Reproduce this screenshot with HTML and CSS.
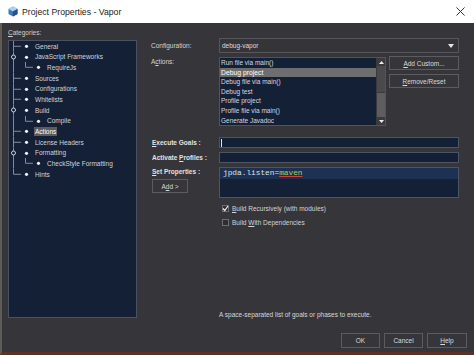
FILE: index.html
```html
<!DOCTYPE html>
<html lang="en">
<head>
    <meta charset="UTF-8">
    <title>Project Properties - Vapor</title>
    <link rel="stylesheet" href="styles.css">
</head>
<body>
    <div class="titlebar">
        <svg class="app-icon" width="10" height="11" viewBox="0 0 10 11">
            <path d="M5 0.5L9.5 3V8L5 10.5L0.5 8V3Z" fill="#3a78b8"/>
            <path d="M5 0.5L9.5 3L5 5.5L0.5 3Z" fill="#a9d2f2"/>
            <path d="M5 5.5V10.5L9.5 8V3Z" fill="#21538a"/>
        </svg>
        <span class="title">Project Properties - Vapor</span>
        <svg class="close" width="9" height="9" viewBox="0 0 9 9">
            <path d="M0.5 0.5L8.5 8.5M8.5 0.5L0.5 8.5" stroke="#333" stroke-width="1"/>
        </svg>
    </div>

    <div class="frame">
        <div class="main">
            <!-- categories -->
            <div class="categories">
                <div class="cat-label"><u>C</u>ategories:</div>
                <div class="tree">
                    <div class="tree-row">
                        <svg class="gutter g1" viewBox="0 0 26 10.67"><path class="ln" d="M4.5 0V10.67M4.5 5.3H12"/><circle class="dot" cx="17.5" cy="5.3" r="1.6"/></svg>
                        <span>General</span>
                    </div>
                    <div class="tree-row">
                        <svg class="gutter g1" viewBox="0 0 26 10.67"><path class="ln" d="M4.5 0V10.67"/><circle class="exp" cx="4.5" cy="5" r="2"/><circle class="dot" cx="17.5" cy="5.3" r="1.6"/></svg>
                        <span>JavaScript Frameworks</span>
                    </div>
                    <div class="tree-row">
                        <svg class="gutter g2" viewBox="0 0 38 10.67"><path class="ln" d="M4.5 0V10.67M16.5 0V5.3H24"/><circle class="dot" cx="29.5" cy="5.3" r="1.6"/></svg>
                        <span>RequireJs</span>
                    </div>
                    <div class="tree-row">
                        <svg class="gutter g1" viewBox="0 0 26 10.67"><path class="ln" d="M4.5 0V10.67M4.5 5.3H12"/><circle class="dot" cx="17.5" cy="5.3" r="1.6"/></svg>
                        <span>Sources</span>
                    </div>
                    <div class="tree-row">
                        <svg class="gutter g1" viewBox="0 0 26 10.67"><path class="ln" d="M4.5 0V10.67M4.5 5.3H12"/><circle class="dot" cx="17.5" cy="5.3" r="1.6"/></svg>
                        <span>Configurations</span>
                    </div>
                    <div class="tree-row">
                        <svg class="gutter g1" viewBox="0 0 26 10.67"><path class="ln" d="M4.5 0V10.67M4.5 5.3H12"/><circle class="dot" cx="17.5" cy="5.3" r="1.6"/></svg>
                        <span>Whitelists</span>
                    </div>
                    <div class="tree-row">
                        <svg class="gutter g1" viewBox="0 0 26 10.67"><path class="ln" d="M4.5 0V10.67"/><circle class="exp" cx="4.5" cy="5" r="2"/><circle class="dot" cx="17.5" cy="5.3" r="1.6"/></svg>
                        <span>Build</span>
                    </div>
                    <div class="tree-row">
                        <svg class="gutter g2" viewBox="0 0 38 10.67"><path class="ln" d="M4.5 0V10.67M16.5 0V5.3H24"/><circle class="dot" cx="29.5" cy="5.3" r="1.6"/></svg>
                        <span>Compile</span>
                    </div>
                    <div class="tree-row">
                        <svg class="gutter g1" viewBox="0 0 26 10.67"><path class="ln" d="M4.5 0V10.67M4.5 5.3H12"/><circle class="dot" cx="17.5" cy="5.3" r="1.6"/></svg>
                        <span class="selected">Actions</span>
                    </div>
                    <div class="tree-row">
                        <svg class="gutter g1" viewBox="0 0 26 10.67"><path class="ln" d="M4.5 0V10.67M4.5 5.3H12"/><circle class="dot" cx="17.5" cy="5.3" r="1.6"/></svg>
                        <span>License Headers</span>
                    </div>
                    <div class="tree-row">
                        <svg class="gutter g1" viewBox="0 0 26 10.67"><path class="ln" d="M4.5 0V10.67"/><circle class="exp" cx="4.5" cy="5" r="2"/><circle class="dot" cx="17.5" cy="5.3" r="1.6"/></svg>
                        <span>Formatting</span>
                    </div>
                    <div class="tree-row">
                        <svg class="gutter g2" viewBox="0 0 38 10.67"><path class="ln" d="M4.5 0V10.67M16.5 0V5.3H24"/><circle class="dot" cx="29.5" cy="5.3" r="1.6"/></svg>
                        <span>CheckStyle Formatting</span>
                    </div>
                    <div class="tree-row">
                        <svg class="gutter g1" viewBox="0 0 26 10.67"><path class="ln" d="M4.5 0V5.3H12"/><circle class="dot" cx="17.5" cy="5.3" r="1.6"/></svg>
                        <span>Hints</span>
                    </div>
                </div>
            </div>

            <!-- form -->
            <div class="form">
                <div class="config-row">
                    <label class="label">Configuration:</label>
                    <div class="combo">
                        <span>debug-vapor</span>
                        <svg width="6" height="4" viewBox="0 0 6 4"><path d="M0 0H6L3 4Z" fill="#e6e6e6"/></svg>
                    </div>
                </div>

                <div class="actions-row">
                    <label class="label">A<u>c</u>tions:</label>
                    <div class="list">
                        <div class="items">
                            <div class="item">Run file via main()</div>
                            <div class="item sel">Debug project</div>
                            <div class="item">Debug file via main()</div>
                            <div class="item">Debug test</div>
                            <div class="item">Profile project</div>
                            <div class="item">Profile file via main()</div>
                            <div class="item">Generate Javadoc</div>
                        </div>
                        <div class="scrollbar">
                            <div class="sb-btn"><svg width="5" height="3" viewBox="0 0 5 3"><path d="M0 3H5L2.5 0Z" fill="#eee"/></svg></div>
                            <div class="sb-thumb"></div>
                            <div class="sb-track"></div>
                            <div class="sb-btn"><svg width="5" height="3" viewBox="0 0 5 3"><path d="M0 0H5L2.5 3Z" fill="#eee"/></svg></div>
                        </div>
                    </div>
                    <div class="side-buttons">
                        <button class="btn"><u>A</u>dd Custom...</button>
                        <button class="btn"><u>R</u>emove/Reset</button>
                    </div>
                </div>

                <div class="goals">
                    <label class="label bold"><u>E</u>xecute Goals :</label>
                    <div class="field"><span class="caret"></span></div>

                    <label class="label bold">Activate <u>P</u>rofiles :</label>
                    <div class="field"></div>

                    <div class="label-stack">
                        <label class="label bold"><u>S</u>et Properties :</label>
                        <button class="btn add-btn">A<u>d</u>d &gt;</button>
                    </div>
                    <div class="props">
                        <div class="props-line">jpda.listen=<span class="val">maven</span></div>
                    </div>
                </div>

                <div class="checks">
                    <div class="check">
                        <span class="box">
                            <svg width="7" height="7" viewBox="0 0 7 7"><path d="M1 3.5L2.8 5.5L6 1" stroke="#f2f2f2" stroke-width="1.2" fill="none"/></svg>
                        </span>
                        <span><u>B</u>uild Recursively (with modules)</span>
                    </div>
                    <div class="check">
                        <span class="box"></span>
                        <span>Build <u>W</u>ith Dependencies</span>
                    </div>
                </div>

                <div class="hint">A space-separated list of goals or phases to execute.</div>
            </div>
        </div>

        <div class="footer">
            <button class="btn dlg-btn">OK</button>
            <button class="btn dlg-btn">Cancel</button>
            <button class="btn dlg-btn help"><u>H</u>elp</button>
        </div>
    </div>
</body>
</html>
```

FILE: styles.css
```css
* {
    box-sizing: border-box;
    margin: 0;
    padding: 0;
}
body {
    width: 474px;
    height: 355px;
    overflow: hidden;
    font-family: "Liberation Sans", Arial, sans-serif;
    font-size: 6.5px;
    color: #d4d4d6;
    background-color: #363539;
}
u {
    text-decoration-thickness: 0.5px;
    text-underline-offset: 1px;
}
.titlebar {
    height: 23px;
    display: flex;
    align-items: center;
    padding-left: 8px;
    background-color: #fff;
}
.title {
    margin-left: 4px;
    font-size: 8.7px;
    color: #1b1b1b;
}
.close {
    margin-left: auto;
    margin-right: 9px;
}
.frame {
    height: 332px;
    display: flex;
    flex-direction: column;
    border-left: 2px solid #5f5b57;
    border-bottom: 3px solid #5a3226;
}
.main {
    height: 303px;
    display: flex;
    padding-left: 6px;
}
.categories {
    width: 129px;
    padding-top: 5px;
}
.cat-label {
    line-height: 10px;
    margin-bottom: 2px;
    color: #d0d0d0;
}
.tree {
    height: 278px;
    background-color: #142036;
    border: 1px solid #4a5262;
}
.tree-row {
    height: 10.67px;
    display: flex;
    align-items: center;
    white-space: nowrap;
    color: #d0d5de;
}
.gutter {
    flex: none;
    height: 10.67px;
}
.g1 {
    width: 26px;
}
.g2 {
    width: 38px;
}
.ln {
    stroke: #858d9c;
    stroke-width: 1;
    fill: none;
}
.dot {
    fill: #eef1f6;
}
.exp {
    fill: #142036;
    stroke: #cfd3da;
    stroke-width: 1;
}
.tree-row .selected {
    margin-left: -1px;
    padding: 1px 1px;
    background-color: #5c5c60;
    color: #fff;
}
.form {
    width: 308px;
    margin-left: 14px;
    display: flex;
    flex-direction: column;
    padding-top: 15px;
}
.label {
    display: block;
    width: 68px;
    color: #d4d4d6;
}
.bold {
    font-weight: bold;
    color: #e2e2e4;
    padding-left: 1px;
    line-height: 11px;
}
.config-row {
    display: flex;
    height: 15px;
}
.config-row .label {
    line-height: 15px;
}
.combo {
    width: 240px;
    height: 15px;
    display: flex;
    align-items: center;
    justify-content: space-between;
    padding: 0 4px 0 2px;
    border: 1px solid #57575b;
    background-color: #353438;
    color: #dcdcde;
}
.actions-row {
    display: flex;
    height: 69px;
    margin-top: 4px;
}
.actions-row .label {
    line-height: 9.6px;
}
.list {
    width: 167px;
    height: 69px;
    display: flex;
    border: 1px solid #4c5466;
    background-color: #142036;
}
.items {
    flex: 1;
}
.item {
    line-height: 9.6px;
    padding-left: 1px;
    color: #d4d8e0;
    white-space: nowrap;
}
.item.sel {
    background-color: #6e6e70;
    color: #fff;
    font-size: 6.8px;
}
.scrollbar {
    width: 9px;
    display: flex;
    flex-direction: column;
    border-left: 1px solid #3a3a3c;
    background-color: #5e5e60;
}
.sb-btn {
    height: 8px;
    display: flex;
    align-items: center;
    justify-content: center;
    background-color: #3b3b3e;
}
.sb-thumb {
    height: 27px;
    background-color: #4a4a4d;
    border-bottom: 1px solid #3a3a3c;
}
.sb-track {
    flex: 1;
}
.side-buttons {
    display: flex;
    flex-direction: column;
    gap: 4px;
    margin-left: 3px;
    margin-top: -1px;
}
.btn {
    height: 14px;
    border: 1px solid #5c5c60;
    background-color: #363539;
    color: #dadadc;
    font-family: "Liberation Sans", Arial, sans-serif;
    font-size: 6.5px;
}
.side-buttons .btn {
    width: 70px;
}
.goals {
    display: grid;
    grid-template-columns: 68px 240px;
    row-gap: 4px;
    margin-top: 11px;
}
.field {
    height: 11px;
    border: 1px solid #4c5466;
    background-color: #142036;
    display: flex;
    align-items: center;
}
.caret {
    width: 1px;
    height: 8px;
    margin-left: 1px;
    background-color: #e6e6e6;
}
.label-stack .label {
    line-height: 10px;
}
.add-btn {
    display: block;
    width: 36px;
    margin-top: 2px;
    margin-left: 1px;
}
.props {
    height: 31px;
    border: 1px solid #4c5466;
    background-color: #142036;
}
.props-line {
    line-height: 11px;
    padding-left: 3px;
    background-color: #1d3152;
    font-family: "Liberation Mono", "Courier New", monospace;
    font-size: 7.8px;
    color: #dde2ea;
}
.val {
    color: #a4cf5c;
    text-decoration: underline #d04040;
    text-decoration-thickness: 1px;
    text-underline-offset: 1px;
}
.checks {
    display: flex;
    flex-direction: column;
    gap: 4px;
    margin-top: 5px;
    margin-left: 68px;
}
.check {
    height: 10px;
    display: flex;
    align-items: center;
}
.box {
    width: 7px;
    height: 7px;
    margin-left: 3px;
    margin-right: 3px;
    border: 1px solid #6e6e72;
    background-color: #2e2e32;
    display: flex;
    align-items: center;
    justify-content: center;
}
.box svg {
    flex: none;
}
.hint {
    margin-top: auto;
    margin-left: 68px;
    margin-bottom: 6px;
    line-height: 10px;
    color: #d8d8da;
}
.footer {
    flex: 1;
    display: flex;
    justify-content: flex-end;
    gap: 4px;
    padding: 7px 7px 0 0;
}
.dlg-btn {
    width: 39px;
    height: 15px;
}
.dlg-btn.help {
    width: 40px;
}
```
